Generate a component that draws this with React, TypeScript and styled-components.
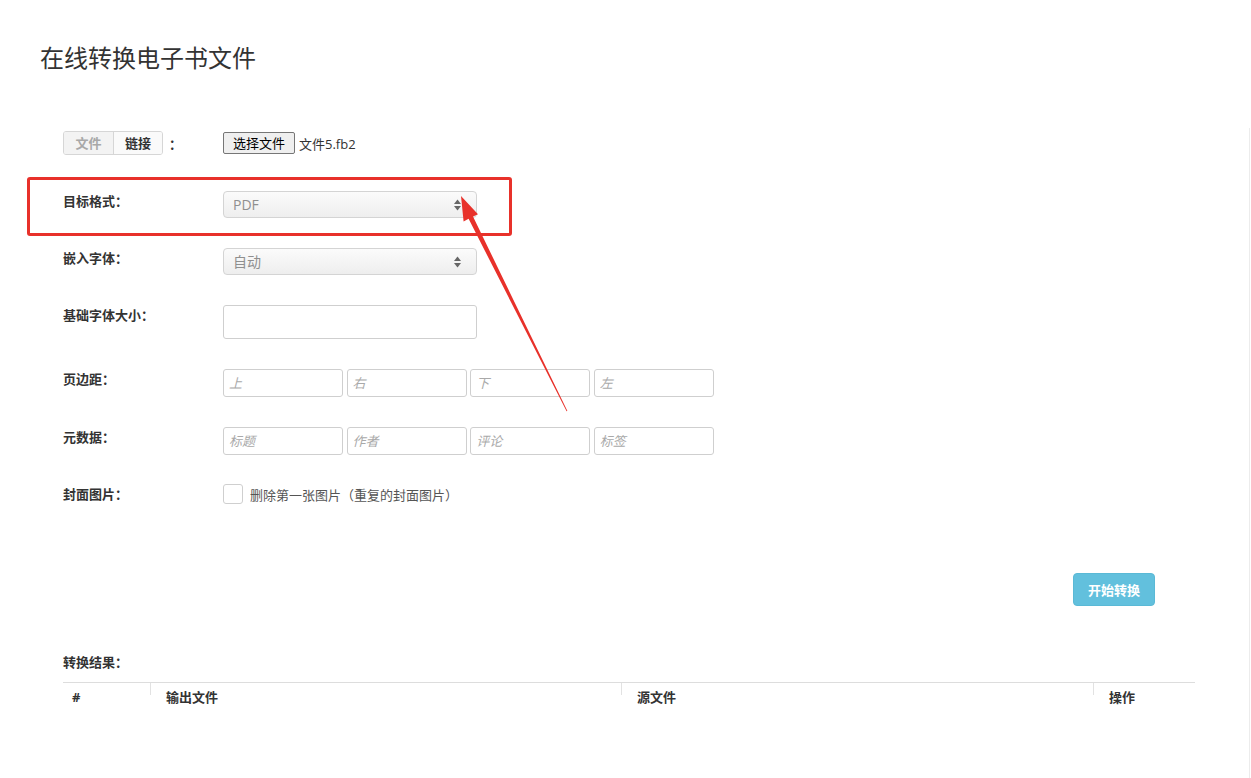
import React from 'react';
import styled, { createGlobalStyle } from 'styled-components';

const GlobalStyle = createGlobalStyle`
  html, body {
    margin: 0;
    padding: 0;
    background: #fff;
  }
  body {
    font-family: "Open Sans", "Noto Sans CJK SC", sans-serif;
    font-size: 13px;
    color: #333;
  }
  * {
    box-sizing: border-box;
  }
`;

const Page = styled.div`
  position: relative;
  width: 1251px;
  height: 778px;
  overflow: hidden;
`;

const Title = styled.h1`
  margin: 0;
  padding: 41px 0 0 40px;
  height: 128px;
  font-size: 24px;
  font-weight: 400;
  line-height: 34px;
  color: #333;
`;

const Panel = styled.div`
  width: 1250px;
  height: 650px;
  padding: 3px 0 0 63px;
  border-right: 1px solid #ececec;
`;

const Form = styled.div`
  width: 1132px;
  display: flex;
  flex-direction: column;
`;

const Row = styled.div<{ $top: number }>`
  display: flex;
  align-items: flex-start;
  margin-top: ${({ $top }) => $top}px;
`;

const Label = styled.div`
  width: 160px;
  flex-shrink: 0;
  font-size: 13px;
  font-weight: 700;
  line-height: 20px;
  color: #333;
`;

const SourceLabel = styled.div`
  width: 160px;
  flex-shrink: 0;
  display: flex;
  align-items: center;
  gap: 6px;
  font-weight: 700;
`;

const Toggle = styled.div`
  display: flex;
  height: 24px;
  border: 1px solid #d6d6d6;
  border-radius: 3px;
  overflow: hidden;
`;

const ToggleItem = styled.button<{ $active?: boolean }>`
  width: 49px;
  height: 100%;
  padding: 0;
  border: 0;
  border-left: ${({ $active }) => ($active ? '0' : '1px solid #d6d6d6')};
  background: ${({ $active }) => ($active ? '#f3f3f3' : '#fafafa')};
  color: ${({ $active }) => ($active ? '#a8a8a8' : '#333')};
  font-family: inherit;
  font-size: 13px;
  font-weight: 700;
  line-height: 22px;
`;

const FileControl = styled.div`
  display: flex;
  align-items: center;
  gap: 4px;
  height: 24px;
`;

const FileButton = styled.button`
  width: 72px;
  height: 22px;
  padding: 0;
  border: 1px solid #767676;
  border-radius: 2px;
  background: #efefef;
  color: #000;
  font-family: inherit;
  font-size: 13px;
  line-height: 20px;
`;

const FileName = styled.span`
  font-size: 13px;
  color: #333;
`;

const Select = styled.div`
  position: relative;
  width: 254px;
  height: 27px;
  padding: 0 28px 0 9px;
  border: 1px solid #d4d4d4;
  border-radius: 4px;
  background: linear-gradient(#fbfbfb, #eeeeee);
  color: #8f8f8f;
  font-size: 14px;
  line-height: 25px;
`;

const Caret = styled.svg`
  position: absolute;
  right: 15px;
  top: 7px;
`;

const TextInput = styled.input<{ $w: number; $h: number }>`
  width: ${({ $w }) => $w}px;
  height: ${({ $h }) => $h}px;
  padding: 0 5px;
  border: 1px solid #cfcfcf;
  border-radius: 3px;
  background: #fff;
  font-family: inherit;
  font-size: 13px;
  color: #333;
  outline: none;
  &::placeholder {
    color: #a9a9a9;
    font-style: italic;
  }
`;

const InputGroup = styled.div`
  display: flex;
  gap: 3.6px;
`;

const CheckLine = styled.label`
  display: flex;
  align-items: center;
  gap: 7px;
  height: 20px;
  font-size: 13px;
  color: #555;
`;

const CheckBox = styled.span`
  width: 20px;
  height: 20px;
  border: 1px solid #cfcfcf;
  border-radius: 3px;
  background: #fff;
`;

const Actions = styled.div`
  display: flex;
  justify-content: flex-end;
  margin-top: 69px;
  padding-right: 40px;
`;

const PrimaryButton = styled.button`
  width: 82px;
  height: 33px;
  border: 1px solid #5ab9d6;
  border-radius: 4px;
  background: #62c0dd;
  color: #fff;
  font-family: inherit;
  font-size: 13px;
  font-weight: 700;
`;

const ResultTitle = styled.div`
  margin-top: 46px;
  font-size: 13px;
  font-weight: 700;
  line-height: 20px;
`;

const Table = styled.table`
  width: 1132px;
  margin-top: 10px;
  border-collapse: collapse;
  border-top: 1px solid #dddddd;
`;

const Th = styled.th<{ $w: number; $pad: number; $sep?: boolean }>`
  position: relative;
  width: ${({ $w }) => $w}px;
  height: 28px;
  padding: 0 0 0 ${({ $pad }) => $pad}px;
  text-align: left;
  font-size: 13px;
  font-weight: 700;
  color: #333;
  &::before {
    content: '';
    display: ${({ $sep }) => ($sep ? 'block' : 'none')};
    position: absolute;
    left: 0;
    top: 0;
    height: 12px;
    border-left: 1px solid #e2e2e2;
  }
`;

const Highlight = styled.div`
  position: absolute;
  left: 27px;
  top: 177px;
  width: 485px;
  height: 59px;
  border: 3px solid #e8312a;
  border-radius: 3px;
  pointer-events: none;
`;

const Overlay = styled.svg`
  position: absolute;
  left: 0;
  top: 0;
  pointer-events: none;
`;

function SelectBox({ value }: { value: string }) {
  return (
    <Select>
      {value}
      <Caret width="7" height="12" viewBox="0 0 7 12">
        <path d="M3.5 0.5 L7 5 H0 Z" fill="#666" />
        <path d="M0 7 H7 L3.5 11.5 Z" fill="#666" />
      </Caret>
    </Select>
  );
}

export default function App() {
  return (
    <Page>
      <GlobalStyle />
      <Title>在线转换电子书文件</Title>
      <Panel>
        <Form>
          <Row $top={0}>
            <SourceLabel>
              <Toggle>
                <ToggleItem $active>文件</ToggleItem>
                <ToggleItem>链接</ToggleItem>
              </Toggle>
              ：
            </SourceLabel>
            <FileControl>
              <FileButton>选择文件</FileButton>
              <FileName>文件5.fb2</FileName>
            </FileControl>
          </Row>
          <Row $top={36}>
            <Label>目标格式：</Label>
            <SelectBox value="PDF" />
          </Row>
          <Row $top={30}>
            <Label>嵌入字体：</Label>
            <SelectBox value="自动" />
          </Row>
          <Row $top={30}>
            <Label>基础字体大小：</Label>
            <TextInput $w={254} $h={34} />
          </Row>
          <Row $top={30}>
            <Label>页边距：</Label>
            <InputGroup>
              {['上', '右', '下', '左'].map((p) => (
                <TextInput key={p} $w={120} $h={28} placeholder={p} />
              ))}
            </InputGroup>
          </Row>
          <Row $top={30}>
            <Label>元数据：</Label>
            <InputGroup>
              {['标题', '作者', '评论', '标签'].map((p) => (
                <TextInput key={p} $w={120} $h={28} placeholder={p} />
              ))}
            </InputGroup>
          </Row>
          <Row $top={29}>
            <Label>封面图片：</Label>
            <CheckLine>
              <CheckBox />
              删除第一张图片（重复的封面图片）
            </CheckLine>
          </Row>
          <Actions>
            <PrimaryButton>开始转换</PrimaryButton>
          </Actions>
          <ResultTitle>转换结果：</ResultTitle>
          <Table>
            <thead>
              <tr>
                <Th $w={87} $pad={9}>#</Th>
                <Th $w={471} $pad={16} $sep>输出文件</Th>
                <Th $w={472} $pad={16} $sep>源文件</Th>
                <Th $w={102} $pad={16} $sep>操作</Th>
              </tr>
            </thead>
          </Table>
        </Form>
      </Panel>
      <Highlight />
      <Overlay width="1251" height="778" viewBox="0 0 1251 778">
        <polygon
          points="461,196 478,214.2 473,216.6 567.4,411 566.6,411.3 468.6,218.8 463.6,221.5"
          fill="#e8312a"
        />
      </Overlay>
    </Page>
  );
}
